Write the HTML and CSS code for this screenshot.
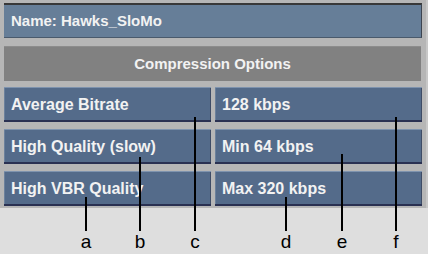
FILE: index.html
```html
<!DOCTYPE html>
<html lang="en">
<head>
    <meta charset="UTF-8">
    <title>Compression Options</title>
    <link rel="stylesheet" href="styles.css">
</head>
<body>
    <div class="figure">
        <div class="panel">
            <div class="name-field">Name: Hawks_SloMo</div>
            <div class="section-bar">Compression Options</div>
            <div class="options">
                <div class="btn">Average Bitrate</div>
                <div class="btn">128 kbps</div>
                <div class="btn">High Quality (slow)</div>
                <div class="btn">Min 64 kbps</div>
                <div class="btn">High VBR Quality</div>
                <div class="btn">Max 320 kbps</div>
            </div>
        </div>

        <!-- callouts -->
        <div class="callout" style="left: 85px; top: 197px;"><span>a</span></div>
        <div class="callout" style="left: 139px; top: 157px;"><span>b</span></div>
        <div class="callout" style="left: 194px; top: 117px;"><span>c</span></div>
        <div class="callout" style="left: 285px; top: 197px;"><span>d</span></div>
        <div class="callout" style="left: 341px; top: 154px;"><span>e</span></div>
        <div class="callout" style="left: 395px; top: 117px;"><span>f</span></div>
    </div>
</body>
</html>
```

FILE: styles.css
```css
body {
    margin: 0;
    background-color: #dedede;
    font-family: "Liberation Sans", Arial, sans-serif;
}
.figure {
    position: relative;
    width: 428px;
    height: 254px;
}
.panel {
    width: 418px;
    height: 205px;
    padding: 3px 4px 0 4px;
    background-color: #b6b6b6;
    border-right: 2px solid #c8c8c8;
}
.name-field {
    height: 32px;
    line-height: 32px;
    padding-left: 7px;
    background-color: #667e98;
    border-top: 2px solid #383838;
    border-right: 1px solid #3c4450;
    border-bottom: 1px solid #4a5a6c;
    color: #f2f2f2;
    font-size: 15px;
    font-weight: bold;
}
.section-bar {
    margin-top: 8px;
    margin-right: 1px;
    height: 34px;
    line-height: 34px;
    text-align: center;
    background-color: #818181;
    border-top: 1px solid #8c8c8c;
    color: #f2f2f2;
    font-size: 15px;
    font-weight: bold;
}
.options {
    margin-top: 6px;
    display: grid;
    grid-template-columns: 207px 207px;
    column-gap: 4px;
    row-gap: 7px;
}
.btn {
    height: 32px;
    line-height: 34px;
    padding-left: 7px;
    background-color: #546b8a;
    border-top: 1px solid #7e93ae;
    border-bottom: 2px solid #2a3152;
    box-shadow: inset 1px 0 0 #6c819c, inset -1px 0 0 #3e4c66;
    color: #f2f2f2;
    font-size: 16px;
    font-weight: bold;
}
.callout {
    position: absolute;
    bottom: 23px;
    width: 2px;
    background-color: #000;
}
.callout span {
    position: absolute;
    top: 100%;
    left: -9px;
    width: 20px;
    text-align: center;
    font-size: 19px;
    line-height: 22px;
    color: #000;
}
```
